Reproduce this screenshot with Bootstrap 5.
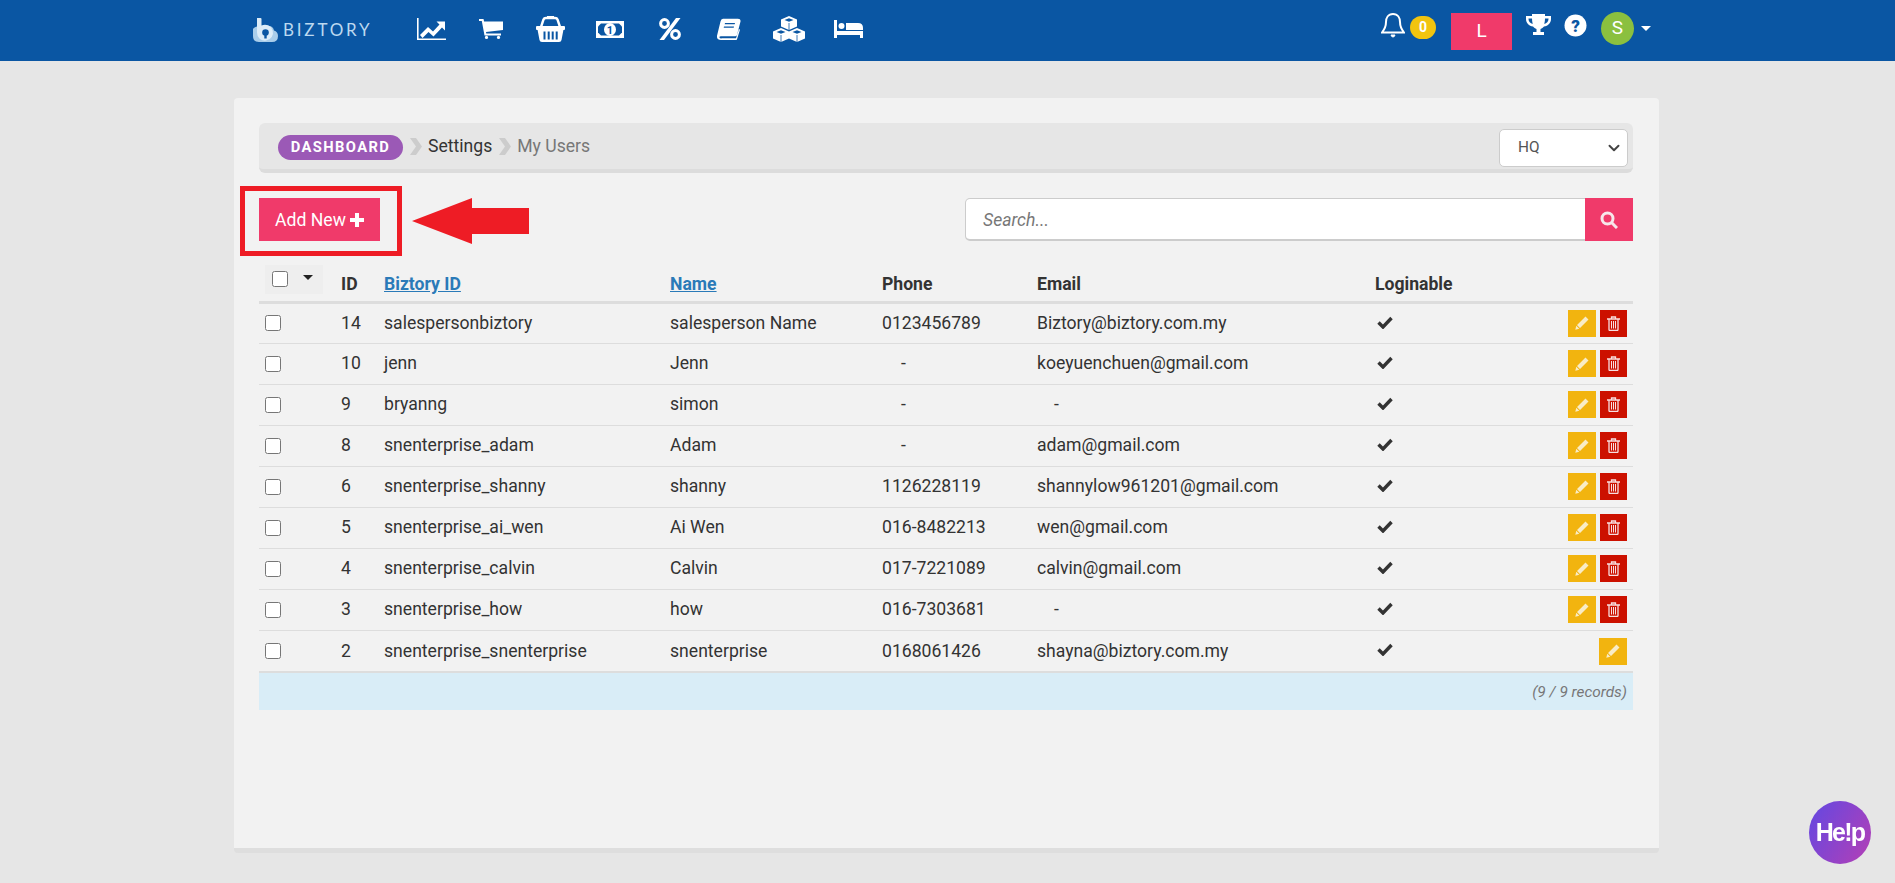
<!DOCTYPE html>
<html lang="en"><head><meta charset="utf-8"><title>My Users</title>
<link href="https://cdn.jsdelivr.net/npm/bootstrap@5.3.0/dist/css/bootstrap.min.css" rel="stylesheet">
<style>
html,body{height:100%}
body{background:#e6e6e6;font-family:Roboto,"Liberation Sans",sans-serif;color:#333;font-size:17.6px;overflow:hidden}
.topbar{background:#0a56a3;height:61px;padding:0 244px 0 253px;color:#fff}
.brand{width:149px;color:#bcd9f0;font-family:Lato,sans-serif;font-size:17px;letter-spacing:2.800px;gap:5px;margin-top:-1px}
.navicons{gap:0;margin-top:-3px}
.navicons a{display:flex;justify-content:center;color:#fff;width:59.5px}
.navicons svg{display:block}
.tools{height:61px}
.bellicon{margin-top:-10px}
.countpill{background:#f1c40f;color:#fff;font-weight:700;font-size:14px;width:26px;height:23px;border-radius:12px;margin-left:5px;line-height:23px;margin-top:-7px}
.lbox{background:#f03a6a;color:#fff;width:61px;height:37px;margin:1px 14px 0 15px;font-size:19px}
.cupicon{margin-top:-10px}
.helpicon{margin:-10px 0 0 13px}
.avatar{background:#8bc03f;color:#fff;width:33px;height:33px;border-radius:50%;font-size:19px;margin-left:14px;margin-top:-4px}
.caretdown{border-top:5px solid #fff;border-left:5px solid transparent;border-right:5px solid transparent;margin-left:7px;margin-top:-4px}
.sheet{width:1425px;height:755px;margin:37px 0 0 234px;background:#f2f2f2;border-bottom:5px solid #dedede;border-radius:4px;padding:25px 26px 0 25px}
.crumbs{height:50px;background:#e6e6e6;border-bottom:4px solid #dcdcdc;border-radius:6px;padding:0 5px 0 19px;margin-bottom:25px}
.crumbpill{background:#9b59b6;color:#fff;font-weight:700;font-size:14.7px;letter-spacing:1.400px;height:25px;width:125px;border-radius:13px;margin-top:3px}
.crumbtxt{font-size:17.6px;margin-top:1px}
.crumbsep{margin:1px 6px 0 7px;display:block}
.muted-crumb{color:#777}
.crumbsel.form-select{width:129px;height:38px;font-size:15.4px;padding:0 0 0 18px;margin-top:4px;border-color:#ccc;color:#555;border-radius:5px;background-position:right 5px center;background-image:url("data:image/svg+xml,%3csvg xmlns='http://www.w3.org/2000/svg' viewBox='0 0 16 16'%3e%3cpath fill='none' stroke='%23444' stroke-linecap='round' stroke-linejoin='round' stroke-width='2.600' d='m2 5 6 6 6-6'/%3e%3c/svg%3e")}
.toolrow{position:relative;height:43px}
.addbtn.btn{background:#f03a6a;color:#fff;border:0;border-radius:0;width:121px;height:43px;font-size:17.6px;padding:1px 0 0}
.redframe{position:absolute;left:-19px;top:-12px;width:162px;height:70px;border:5px solid #ee1c25;pointer-events:none}
.redarrow{position:absolute;left:153px;top:0;display:block}
.searchbox{width:668px;height:43px}
.searchbox .form-control{height:43px;font-style:italic;border:1px solid #ccc;border-width:1px 1px 2px;padding:2px 0 0 17px;font-size:17.6px;border-radius:5px 0 0 5px}
.searchbox .form-control::placeholder{color:#777}
.searchbtn.btn{background:#f03a6a;border:0;border-radius:0;width:48px;height:43px;padding:0}
.usertable.table{--bs-table-bg:transparent;--bs-table-color:#333;table-layout:fixed;width:1374px;margin:21px 0 0 0;border-color:#ddd}
.usertable th,.usertable td{padding:0 6px;vertical-align:middle;border-bottom:1px solid #ddd;height:41px;white-space:nowrap}
.usertable thead th{height:40px;border-bottom:3px solid #ddd;font-weight:700;padding-top:5px}
.usertable thead th:first-child{padding-top:0}
.usertable th a{color:#2a7ab8}
.usertable tr:last-child td{border-bottom:2px solid #ddd;height:42px}
.selbox{display:inline-flex;background:#eee;width:58px;height:29px;padding-left:7px;margin-top:-6px;gap:15px;align-items:flex-start;padding-top:6px}
.selbox i{display:block;border-top:5px solid #222;border-left:5px solid transparent;border-right:5px solid transparent;margin-top:4px}
.tick{display:block;width:16px;height:16px;margin:0;appearance:auto;border:1px solid #767676}
.dash1{padding-left:25px!important}
.dash2{padding-left:23px!important}
.tickmark{margin:-2px 0 0 2px}
.actbtn{display:inline-flex;align-items:center;justify-content:center;width:28px;height:27px;border:0;padding:0;margin-left:4px;vertical-align:middle}
.acted{background:#f2b40f}
.actdel{background:#cc1100;width:27px}
.recordbar{height:37px;background:#d9edf7;color:#777;font-style:italic;font-size:15.4px;padding:3px 6px 0 0}
.helpbubble{position:fixed;left:1809px;top:801px;width:62px;height:63px;border-radius:50%;background:linear-gradient(120deg,#6248e2,#b53fb5);color:#fff;font-weight:700;font-size:25px;letter-spacing:-1.800px;font-family:"Liberation Sans",sans-serif}
</style></head>
<body>
<nav class="topbar d-flex align-items-center">
  <a class="brand d-flex align-items-center text-decoration-none" href="#">
    <svg width="25" height="24" viewBox="0 0 25 24"><path fill="#a9cdea" d="M5 8a5 5 0 0 0-1 .5A6 6 0 0 0 0 18q0 6 6 6h13q6 0 6-6a6 6 0 0 0-4-5.500Q20 8 16 8z"/><path fill="#dcecf8" d="M4 0h3.500q1 0 1 1v6.500A8 8 0 1 1 4 14.500z"/><circle cx="12.500" cy="14.500" r="3.300" fill="#0a56a3"/><path fill="#0a56a3" d="M11.300 15h2.400v5.500h-2.400z"/></svg>
    <span>BIZTORY</span>
  </a>
  <div class="navicons d-flex align-items-center">
    <a href="#"><svg width="29" height="22" viewBox="0 0 29 22" fill="#fff"><path d="M0 0h1.600v20.400H29V22H0z"/><path d="M3 17l8-8 5 4.500 6.500-7-3-3H28v9l-3-3-8.500 9-5-4.500-6 6z"/></svg></a>
    <a href="#"><svg width="24" height="20" viewBox="0 0 24 20" fill="#fff"><path d="M0 0h4.500l.6 2.500H24v8.500L7 13l.3 1.500H22v2H5.500L2.800 2H0z"/><circle cx="7.500" cy="18.400" r="1.600"/><circle cx="19.500" cy="18.400" r="1.600"/></svg></a>
    <a href="#"><svg width="29" height="26" viewBox="0 0 29 26" fill="#fff"><path d="M1 10h27q1 0 1 1v2q0 1-1 1h-.6L25.500 24q-.3 2-2.500 2H6q-2.200 0-2.500-2L1.600 14H1q-1 0-1-1v-2q0-1 1-1z"/><path fill="none" stroke="#fff" stroke-width="2.400" d="M5 11l2.500-7.500Q8 2 10 2h9q2 0 2.500 1.500L24 11"/><path d="M11 0h7v3h-7z"/><path fill="#0a56a3" d="M7.500 15.500h2v8h-2zm4.200 0h2v8h-2zm4 0h2v8h-2zm4 0h2v8h-2z"/></svg></a>
    <a href="#"><svg width="28" height="17" viewBox="0 0 28 17"><path fill="#fff" d="M0 0h28v17H0z"/><path fill="#0a56a3" d="M5 2.500h18l3 3v6l-3 3H5l-3-3v-6z"/><ellipse cx="14" cy="8.500" rx="6" ry="6.500" fill="#fff"/><text x="14" y="12.500" text-anchor="middle" font-size="11" font-weight="700" font-family="Roboto" fill="#0a56a3">1</text></svg></a>
    <a href="#"><svg width="22" height="22" viewBox="0 0 22 22" fill="none"><circle cx="5.500" cy="5.500" r="3.900" stroke="#fff" stroke-width="3"/><circle cx="16.500" cy="16.500" r="3.900" stroke="#fff" stroke-width="3"/><path fill="#fff" d="M17 0h4.500L5 22H.5z"/></svg></a>
    <a href="#"><svg width="24" height="22" viewBox="0 0 24 26" preserveAspectRatio="none" fill="#fff"><path d="M6 1h15q3 0 2.500 3L20 20q-.5 1.500-2 1.500H4q-2 0-1.500 1.500T5 24h14l3-11 1 1-3 11q-.3 1-1.500 1H4Q-.5 26 0 21L3.500 4Q4 1 6 1z"/><path fill="#0a56a3" d="M8 6h10l-.3 1.500h-10zM7 10h10l-.3 1.500h-10z"/></svg></a>
    <a href="#"><svg width="32" height="26" viewBox="0 0 32 26"><g transform="translate(8 0)"><path fill="#fff" d="M8 0l8 3.500v7L8 14l-8-3.500v-7z"/><path fill="#0a56a3" d="M8 2.300L12.500 4 8 5.700 3.500 4z"/><path stroke="#0a56a3" stroke-width=".8" d="M8 7v7"/></g><g transform="translate(0 12)"><path fill="#fff" d="M8 0l8 3.500v7L8 14l-8-3.500v-7z"/><path fill="#0a56a3" d="M8 2.300L12.500 4 8 5.700 3.500 4z"/><path stroke="#0a56a3" stroke-width=".8" d="M8 7v7"/></g><g transform="translate(16 12)"><path fill="#fff" d="M8 0l8 3.500v7L8 14l-8-3.500v-7z"/><path fill="#0a56a3" d="M8 2.300L12.500 4 8 5.700 3.500 4z"/><path stroke="#0a56a3" stroke-width=".8" d="M8 7v7"/></g></svg></a>
    <a href="#"><svg width="29" height="18" viewBox="0 0 29 18" fill="#fff"><path d="M0 0h3v11h26v7h-3v-3H3v3H0z"/><circle cx="7.500" cy="6" r="3"/><path d="M12 3h12q5 0 5 5v2H12z"/></svg></a>
  </div>
  <div class="tools ms-auto d-flex align-items-center">
    <svg width="24" height="27" viewBox="0 0 24 27" fill="none" stroke="#fff" stroke-width="2" class="bellicon"><path d="M12 2c-5 0-7 4-7 8 0 5-2 8-4 10.500h22C21 18 19 15 19 10c0-4-2-8-7-8z"/><path fill="#fff" d="M10 23h4q-.5 2-2 2t-2-2z" stroke-width="1"/></svg>
    <div class="countpill text-center">0</div>
    <div class="lbox d-flex align-items-center justify-content-center">L</div>
    <svg class="cupicon" width="25" height="23" viewBox="0 0 25 23" fill="#fff"><path d="M6 0h13v2h6v3c0 4-3 7-7 7.500-1 1-2 2-3.500 2.500v3H18v3H7v-3h3.500v-3C9 14.500 8 13.500 7 12.500 3 12 0 9 0 5V2h6zM2.500 4.500V5c0 2.500 1.800 4.500 4.200 5Q6 7.500 6 4.500zm20 0H19q0 3-.7 5.500c2.400-.5 4.200-2.500 4.200-5z"/></svg>
    <svg class="helpicon" width="23" height="23" viewBox="0 0 23 23"><circle cx="11.500" cy="11.500" r="11" fill="#fff"/><text x="11.500" y="17.500" text-anchor="middle" font-size="17" font-weight="900" font-family="Roboto" fill="#0a56a3">?</text></svg>
    <div class="avatar d-flex align-items-center justify-content-center">S</div>
    <span class="caretdown"></span>
  </div>
</nav>

<main class="sheet">
  <div class="crumbs d-flex align-items-center">
    <span class="crumbpill d-flex align-items-center justify-content-center">DASHBOARD</span>
    <svg class="crumbsep" width="12" height="17" viewBox="0 0 12 17"><path fill="#ccc" d="M0 0h6l6 8.500L6 17H0l6-8.500z"/></svg>
    <span class="crumbtxt">Settings</span>
    <svg class="crumbsep" width="12" height="17" viewBox="0 0 12 17"><path fill="#ccc" d="M0 0h6l6 8.500L6 17H0l6-8.500z"/></svg>
    <span class="crumbtxt muted-crumb">My Users</span>
    <select class="form-select crumbsel ms-auto"><option>HQ</option></select>
  </div>

  <div class="toolrow d-flex justify-content-between">
    <button class="btn addbtn d-flex align-items-center justify-content-center gap-1" type="button">Add New
      <svg width="14" height="14" viewBox="0 0 14 14" fill="#fff"><path d="M5 0h4v5h5v4H9v5H5V9H0V5h5z"/></svg></button>
    <div class="redframe"></div>
    <svg class="redarrow" width="117" height="46" viewBox="0 0 117 46"><path fill="#ee1c25" d="M0 23L60 0v10h57v26H60v10z"/></svg>
    <div class="input-group searchbox">
      <input class="form-control" type="text" placeholder="Search...">
      <button class="btn searchbtn d-flex align-items-center justify-content-center" type="button" aria-label="Search">
        <svg width="18" height="18" viewBox="0 0 18 18" fill="none" stroke="#f7e6ea" stroke-width="3"><circle cx="7.500" cy="7.500" r="5.500"/><path d="M11.500 11.500L17 17"/></svg></button>
    </div>
  </div>

  <table class="table usertable">
    <colgroup><col style="width:76px"><col style="width:43px"><col style="width:286px"><col style="width:212px"><col style="width:155px"><col style="width:338px"><col style="width:264px"></colgroup>
    <thead><tr>
      <th><span class="selbox"><input class="tick" type="checkbox"><i></i></span></th>
      <th>ID</th><th><a href="#">Biztory ID</a></th><th><a href="#">Name</a></th><th>Phone</th><th>Email</th><th>Loginable</th>
    </tr></thead>
    <tbody id="rows"></tbody>
  </table>
  <div class="recordbar d-flex align-items-center justify-content-end">(9 / 9 records)</div>
</main>
<div class="helpbubble d-flex align-items-center justify-content-center">He!p</div>
<script>
const rows=[[14,'salespersonbiztory','salesperson Name','0123456789','Biztory@biztory.com.my'],[10,'jenn','Jenn','-','koeyuenchuen@gmail.com'],[9,'bryanng','simon','-','-'],[8,'snenterprise_adam','Adam','-','adam@gmail.com'],[6,'snenterprise_shanny','shanny','1126228119','shannylow961201@gmail.com'],[5,'snenterprise_ai_wen','Ai Wen','016-8482213','wen@gmail.com'],[4,'snenterprise_calvin','Calvin','017-7221089','calvin@gmail.com'],[3,'snenterprise_how','how','016-7303681','-'],[2,'snenterprise_snenterprise','snenterprise','0168061426','shayna@biztory.com.my']];
const pencil='<svg width="14" height="14" viewBox="0 0 14 14" fill="#f9ecc6"><path d="M10.500 0.500l3 3-8.500 8.500-3-3zM1.300 9.700l3 3-4 1z"/></svg>';
const trash='<svg width="13" height="15" viewBox="0 0 13 15"><path fill="none" stroke="#f7dfe0" stroke-width="1.300" d="M4.500 2.500V1h4v1.500M0 3h13M2 3v10.500q0 1 1 1h7q1 0 1-1V3"/><path stroke="#f7dfe0" d="M4.500 5v7.500M6.500 5v7.500M8.500 5v7.500"/></svg>';
const check='<svg class="tickmark" width="16" height="13" viewBox="0 0 16 13" fill="none" stroke="#333" stroke-width="3.400"><path d="M1.500 6.500l4.500 4.500L14.500 2"/></svg>';
document.getElementById('rows').innerHTML=rows.map((r,i)=>`<tr><td><input class="tick" type="checkbox"></td><td>${r[0]}</td><td>${r[1]}</td><td>${r[2]}</td><td class="${r[3]=='-'?'dash1':''}">${r[3]}</td><td class="${r[4]=='-'?'dash2':''}">${r[4]}</td><td><div class="d-flex justify-content-between align-items-center">${check}<span><button class="actbtn acted" aria-label="Edit">${pencil}</button>${i<8?`<button class="actbtn actdel" aria-label="Delete">${trash}</button>`:''}</span></div></td></tr>`).join('');
</script>
<script src="https://cdn.jsdelivr.net/npm/bootstrap@5.3.0/dist/js/bootstrap.bundle.min.js"></script>
</body></html>
